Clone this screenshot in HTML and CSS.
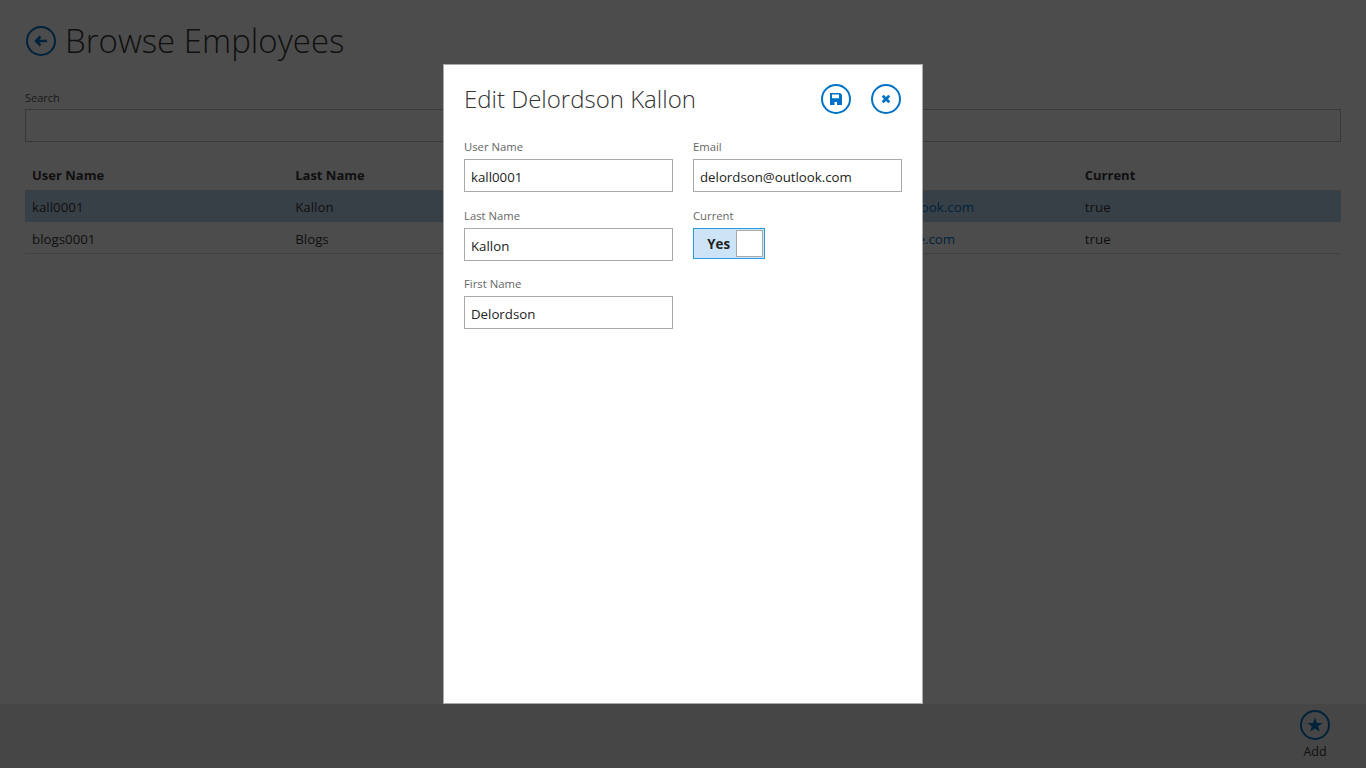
FILE: index.html
```html
<!DOCTYPE html>
<html lang="en">
<head>
<meta charset="utf-8">
<title>Browse Employees</title>
<link rel="stylesheet" href="styles.css">
</head>
<body>
<div class="page">
  <main class="main">
    <header class="page-head">
      <svg class="icon back" viewBox="0 0 30 30"><circle cx="15" cy="15" r="14" class="ring"/><path d="M21 15H10M14.500 10.500L10 15l4.500 4.500" class="stroke arrow"/></svg>
      <h1>Browse Employees</h1>
    </header>
    <label class="search-label">Search</label>
    <input class="search" type="text">
    <div class="table">
      <div class="row head"><span>User Name</span><span>Last Name</span><span>First Name</span><span>Email</span><span>Current</span></div>
      <div class="row selected"><span>kall0001</span><span>Kallon</span><span>Delordson</span><a>delordson@outlook.com</a><span>true</span></div>
      <div class="row last"><span>blogs0001</span><span>Blogs</span><span>Joe</span><a>joe.blogs01@live.com</a><span>true</span></div>
    </div>
  </main>
  <footer class="appbar">
    <div class="appbar-btn">
      <svg class="icon" viewBox="0 0 30 30"><circle cx="15" cy="15" r="14" class="ring"/><path d="M15 7.500l2 5.400h5.600l-4.500 3.400 1.700 5.500-4.800-3.300-4.800 3.300 1.700-5.500-4.500-3.400H13z" class="fill"/></svg>
      <span>Add</span>
    </div>
  </footer>
</div>
<div class="overlay">
  <section class="modal">
    <header class="modal-head">
      <h2>Edit Delordson Kallon</h2>
      <svg class="icon" viewBox="0 0 30 30"><circle cx="15" cy="15" r="14" class="ring"/><path class="fill" fill-rule="evenodd" d="M9 9h10.200l1.800 1.800V21H9zM11 10.500v3.700h7v-3.700zM13.500 18v3H16v-3z"/></svg>
      <svg class="icon" viewBox="0 0 30 30"><circle cx="15" cy="15" r="14" class="ring"/><path d="M11.700 11.700l6.600 6.600M18.300 11.700l-6.600 6.600" class="stroke thick"/></svg>
    </header>
    <div class="form">
      <div class="col">
        <div class="field"><label>User Name</label><input type="text" value="kall0001"></div>
        <div class="field"><label>Last Name</label><input type="text" value="Kallon"></div>
        <div class="field"><label>First Name</label><input type="text" value="Delordson"></div>
      </div>
      <div class="col">
        <div class="field"><label>Email</label><input type="text" value="delordson@outlook.com"></div>
        <div class="field"><label>Current</label>
          <div class="toggle"><b>Yes</b><i class="knob"></i></div>
        </div>
      </div>
    </div>
  </section>
</div>
</body>
</html>
```
FILE: styles.css
```css
* { box-sizing: border-box; }
html, body { margin: 0; height: 100%; }
body {
  font-family: "Open Sans", "Noto Sans", sans-serif;
  font-size: 13.300px;
  color: #383838;
  background: #fff;
  overflow: hidden;
}
.page { height: 768px; display: flex; flex-direction: column; }
.main { flex: 1; padding: 26px 25px 0; }
.page-head { display: flex; align-items: center; gap: 9px; height: 30px; padding-left: 1px; }
h1 { margin: 0; font-size: 33px; font-weight: 300; line-height: 30px; color: #383838; }
.icon { width: 30px; height: 30px; flex: none; display: block; }
.ring { fill: none; stroke: #0072c6; stroke-width: 2; }
.stroke { fill: none; stroke: #0072c6; stroke-width: 2; }
.stroke.arrow { stroke-width: 2.500; }
.stroke.thick { stroke-width: 2.800; }
.fill { fill: #0072c6; }
.search-label { display: block; margin-top: 34px; font-size: 11px; line-height: 15px; color: #5a5a5a; }
.search { display: block; width: 100%; height: 33px; margin-top: 4px; border: 1px solid #bdbdbd; background: transparent; }
.table { margin-top: 17px; }
.row {
  display: grid;
  grid-template-columns: repeat(5, 1fr);
  height: 32px;
  align-items: center;
  border-bottom: 1px solid #d9d9d9;
}
.row > * { padding-left: 7px; }
.row.head { font-weight: 700; font-size: 13px; border-bottom-color: #ccc; }
.row.selected { height: 31px; background: #bbd5ef; border-bottom: 0; }
.row.last { padding-top: 2px; }
.row a { color: #0072c6; }
.appbar { height: 64px; background: #eaeaea; display: flex; justify-content: flex-end; padding: 6px 36px 0 0; }
.appbar-btn { display: flex; flex-direction: column; align-items: center; width: 30px; font-size: 12.500px; line-height: 24px; }
.overlay {
  position: fixed; inset: 0;
  background: rgba(0, 0, 0, .7);
  display: flex; justify-content: center; align-items: flex-start;
  padding-top: 64px;
}
.modal {
  width: 480px; height: 640px;
  background: #fff; border: 1px solid #aaa;
  padding: 19px 20px 0;
  color: #222;
}
.modal-head { display: flex; align-items: center; gap: 20px; height: 30px; margin-right: 1px; }
h2 { margin: 0 auto 0 0; padding-bottom: 2px; font-size: 24px; font-weight: 300; color: #333; }
.form { display: grid; grid-template-columns: 209px 209px; gap: 20px; margin-top: 25px; }
.col { display: flex; flex-direction: column; gap: 15.600px; }
.field label { display: block; font-size: 11.300px; line-height: 16px; color: #666; margin-bottom: 4px; }
.field input {
  display: block; width: 100%; height: 33px;
  border: 1px solid #aaa; padding: 3px 6px 0;
  font: inherit; font-size: 13.250px; color: #222; outline: none;
}
.toggle {
  display: flex; align-items: center; justify-content: flex-end;
  width: 72px; height: 31px; padding: 1px;
  background: #cce4f6; border: 1px solid #2a9be0;
}
.toggle b { font-size: 13.300px; margin-right: 6px; padding-top: 2px; }
.knob { display: block; width: 27px; height: 27px; background: #fff; border: 1px solid #aaa; }
```
